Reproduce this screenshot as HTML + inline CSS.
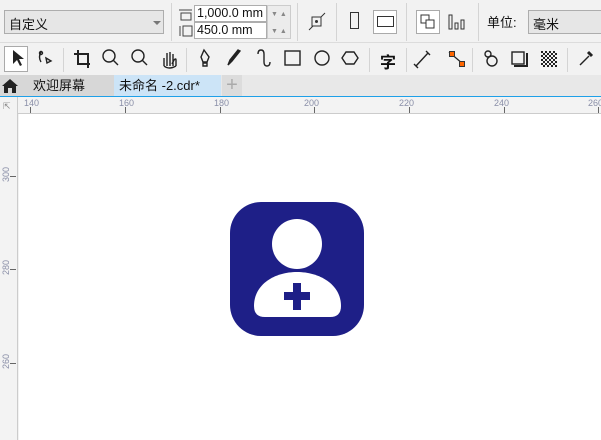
<!DOCTYPE html><html><head><meta charset="utf-8"><style>
*{margin:0;padding:0;box-sizing:border-box}
body{width:601px;height:440px;overflow:hidden;background:#f2f2f2;font-family:"Liberation Sans","Noto Sans CJK SC",sans-serif;position:relative;font-size:13px;color:#111}
.a{position:absolute}
.sep{position:absolute;width:1px;background:#d4d4d4}
</style></head><body>
<div class="a" style="left:0;top:0;width:601px;height:43px;background:#f2f2f2;border-bottom:1px solid #dcdcdc"></div>
<div class="a" style="left:4px;top:10px;width:160px;height:24px;border:1px solid #adadad;background:#e6e6e6;padding:3px 0 0 4px">自定义<span class="a" style="left:148px;top:10px;border:4px solid transparent;border-top:4px solid #777"></span></div>
<div class="sep" style="left:171px;top:3px;height:38px"></div>
<svg class="a" style="left:178px;top:8px" width="16" height="30"><path d="M1 2h13M3 5h10v7H3z" stroke="#444" fill="none"/><path d="M2 18v10M5 18h9v10H5z" stroke="#444" fill="none"/></svg>
<div class="a" style="left:194px;top:5px;width:73px;height:17px;border:1px solid #adadad;background:#fff;padding:0 2px;font-size:12.5px;white-space:nowrap;overflow:hidden;line-height:15px">1,000.0 mm</div>
<div class="a" style="left:194px;top:22px;width:73px;height:17px;border:1px solid #adadad;background:#fff;padding:0 2px;font-size:12.5px;white-space:nowrap;overflow:hidden;line-height:15px">450.0 mm</div>
<div class="a" style="left:267px;top:5px;width:24px;height:34px;border:1px solid #ccc;background:#ececec;font-size:7px;color:#888;line-height:17px;padding-left:3px">▼ ▲<br>▼ ▲</div>
<div class="sep" style="left:297px;top:3px;height:38px"></div>
<svg class="a" style="left:308px;top:12px" width="18" height="20"><rect x="4" y="5" width="9" height="9" fill="none" stroke="#333"/><circle cx="8.5" cy="9.5" r="1.5" fill="#333"/><path d="M1 18l4-4M13 5l4-4" stroke="#333"/></svg>
<div class="sep" style="left:336px;top:3px;height:38px"></div>
<div class="a" style="left:350px;top:12px;width:9px;height:17px;border:1px solid #333"></div>
<div class="a" style="left:373px;top:10px;width:24px;height:24px;border:1px solid #aaa;background:#fff"></div>
<div class="a" style="left:377px;top:16px;width:17px;height:11px;border:1px solid #333"></div>
<div class="sep" style="left:406px;top:3px;height:38px"></div>
<div class="a" style="left:416px;top:10px;width:24px;height:24px;border:1px solid #aaa;background:#fff"></div>
<svg class="a" style="left:419px;top:13px" width="18" height="18"><rect x="2" y="2" width="8" height="8" fill="#fff" stroke="#333"/><rect x="7" y="7" width="8" height="8" fill="#fff" stroke="#333"/></svg>
<svg class="a" style="left:447px;top:13px" width="20" height="18"><rect x="2" y="2" width="3" height="14" fill="none" stroke="#333"/><rect x="8" y="10" width="3" height="6" fill="none" stroke="#333"/><rect x="14" y="7" width="3" height="9" fill="none" stroke="#333"/></svg>
<div class="sep" style="left:478px;top:3px;height:38px"></div>
<div class="a" style="left:487px;top:12px">单位:</div>
<div class="a" style="left:528px;top:10px;width:80px;height:24px;border:1px solid #adadad;background:#e6e6e6;padding:3px 0 0 4px">毫米</div>
<div class="a" style="left:0;top:44px;width:601px;height:31px;background:#f2f2f2"></div>
<div class="a" style="left:4px;top:46px;width:24px;height:26px;border:1px solid #aaa;background:#fff"></div>
<svg class="a" style="left:0;top:44px" width="601" height="31" fill="none" stroke="#222" stroke-width="1.4">
<path d="M13 6v14l4-4 3 6 2-1-3-6h5z" fill="#222" stroke="none"/>
<path d="M41 8q-3 5 0 10M46 14l5 3-4 2z" /><circle cx="41" cy="9" r="1.5"/>
<path d="M78 6v14h12M74 10h14v14" stroke-width="2"/>
<circle cx="109" cy="12" r="6"/><path d="M113 16l5 5"/>
<circle cx="138" cy="12" r="6"/><path d="M142 16l5 5"/>
<path d="M164 22v-8m3 8v-13m3 13v-14m3 14v-12m3 12v-6q0-2-2 0l-2 4" /><path d="M164 22q5 4 12 0"/>
<path d="M204 6l-3 7 2 5h4l2-5z"/><path d="M203 19h4v3h-4z"/>
<path d="M228 21l4-4 8-10-2-1-8 10z" fill="#222"/>
<path d="M258 10q0-4 3-4t3 4v8q0 4 3 4t3-4"/>
<rect x="285" y="7" width="15" height="14"/>
<circle cx="322" cy="14" r="7"/>
<path d="M346 8h8l4 6-4 6h-8l-4-6z"/>
<path d="M416 22l12-13M414 20l4 4M426 7l4 4"/>
<path d="M449 8l14 12" stroke-width="1.2"/>
<circle cx="488" cy="10" r="3"/><circle cx="492" cy="17" r="5"/>
<rect x="512" y="8" width="12" height="12"/><path d="M514 22h13v-13" stroke-width="2"/>
<path d="M580 21l9-9"/><path d="M588 8l4 4" stroke-width="3"/>
</svg>
<div class="a" style="left:449px;top:51px;width:6px;height:6px;background:#f60;border:1px solid #333"></div>
<div class="a" style="left:459px;top:61px;width:6px;height:6px;background:#f60;border:1px solid #333"></div>
<svg class="a" style="left:541px;top:51px" width="16" height="16"><defs><pattern id="p" width="4" height="4" patternUnits="userSpaceOnUse"><rect width="2" height="2" fill="#222"/><rect x="2" y="2" width="2" height="2" fill="#222"/></pattern></defs><rect width="16" height="16" fill="url(#p)"/></svg>
<div class="a" style="left:380px;top:49px;font-size:16px;font-weight:bold">字</div>
<div class="sep" style="left:63px;top:48px;height:24px"></div>
<div class="sep" style="left:186px;top:48px;height:24px"></div>
<div class="sep" style="left:369px;top:48px;height:24px"></div>
<div class="sep" style="left:406px;top:48px;height:24px"></div>
<div class="sep" style="left:472px;top:48px;height:24px"></div>
<div class="sep" style="left:567px;top:48px;height:24px"></div>
<div class="a" style="left:0;top:75px;width:601px;height:21px;background:#e8e8e8"></div>
<div class="a" style="left:0;top:75px;width:114px;height:21px;background:#d7d7d7"></div>
<svg class="a" style="left:1px;top:78px" width="18" height="16"><path d="M1 8L9 1l8 7h-2v7h-4v-5H7v5H3V8z" fill="#222"/></svg>
<div class="a" style="left:33px;top:76px;line-height:19px">欢迎屏幕</div>
<div class="a" style="left:114px;top:75px;width:107px;height:21px;background:#cce4f7;padding:1px 0 0 5px;line-height:19px">未命名 -2.cdr*</div>
<div class="a" style="left:222px;top:75px;width:20px;height:21px;background:#dcdcdc;color:#aaa;font-size:20px;line-height:20px;text-align:center">+</div>
<div class="a" style="left:0;top:96px;width:601px;height:1px;background:#1ea0e8"></div>
<div class="a" style="left:0;top:97px;width:601px;height:17px;background:#f3f3f3;border-bottom:1px solid #ccc"></div>
<div class="a" style="left:0;top:97px;width:18px;height:343px;background:#f3f3f3;border-right:1px solid #ccc"></div>
<svg class="a" style="left:0;top:97px" width="601" height="343" font-family="Liberation Sans" font-size="9" fill="#8a8fa8">
<g stroke="#666">
<path d="M30.5 10v6M125.5 10v6M220.5 10v6M314.5 10v6M409.5 10v6M504.5 10v6M598.5 10v6"/>
</g>
<text x="24" y="9">140</text><text x="119" y="9">160</text><text x="214" y="9">180</text><text x="304" y="9">200</text><text x="399" y="9">220</text><text x="494" y="9">240</text><text x="588" y="9">260</text>
<g stroke="#666"><path d="M10 79.5h6M10 172.5h6M10 266.5h6"/></g>
<text transform="translate(9,85) rotate(-90)">300</text>
<text transform="translate(9,178) rotate(-90)">280</text>
<text transform="translate(9,272) rotate(-90)">260</text>
<text x="3" y="12" fill="#888">⇱</text>
</svg>
<div class="a" style="left:19px;top:114px;width:582px;height:326px;background:#fff"></div>
<svg class="a" style="left:230px;top:202px" width="134" height="134">
<rect x="0" y="0" width="134" height="134" rx="31" fill="#1e1f87"/>
<circle cx="67" cy="42" r="25" fill="#fff"/>
<path d="M24 104 C24 82 45 70 67 70 C89 70 111 82 111 104 Q111 115 100 115 H35 Q24 115 24 104z" fill="#fff"/>
<rect x="63" y="81" width="8" height="27" fill="#1e1f87"/>
<rect x="54" y="90" width="26" height="8" fill="#1e1f87"/>
</svg>
</body></html>
